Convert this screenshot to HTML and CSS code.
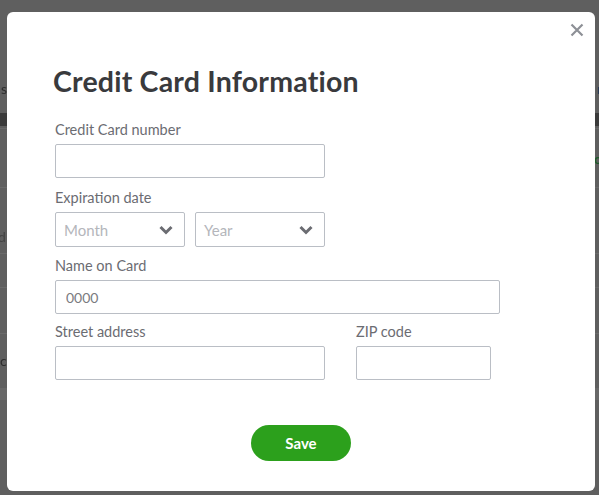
FILE: index.html
```html
<!DOCTYPE html>
<html lang="en">
<head>
  <meta charset="UTF-8" />
  <meta name="viewport" content="width=device-width, initial-scale=1.0" />
  <title>Credit Card Information</title>
  <link rel="stylesheet" href="styles.css">
</head>
<body>
  <div class="backdrop">
    <span class="bg-text bg-s">s</span>
    <span class="bg-text bg-d">d</span>
    <span class="bg-text bg-c">c</span>
    <span class="bg-text bg-r">r</span>
    <span class="bg-text bg-o">o</span>
  </div>

  <div class="modal">
    <button class="close" aria-label="Close">
      <svg width="14" height="14" viewBox="0 0 14 14"><path d="M1.5 1.5l11 11M12.5 1.5l-11 11" stroke="#8d9096" stroke-width="2.2" fill="none"/></svg>
    </button>

    <h1 class="title">Credit Card Information</h1>

    <form class="form">
      <label class="field">
        <span class="label">Credit Card number</span>
        <input class="input w-half" type="text">
      </label>

      <div class="field">
        <span class="label">Expiration date</span>
        <div class="row">
          <div class="select">
            <span>Month</span>
            <svg width="14" height="10" viewBox="0 0 14 10"><path d="M1.5 2l5.5 5.5L12.5 2" stroke="#6b6c72" stroke-width="3" fill="none"/></svg>
          </div>
          <div class="select">
            <span>Year</span>
            <svg width="14" height="10" viewBox="0 0 14 10"><path d="M1.5 2l5.5 5.5L12.5 2" stroke="#6b6c72" stroke-width="3" fill="none"/></svg>
          </div>
        </div>
      </div>

      <label class="field name">
        <span class="label">Name on Card</span>
        <input class="input w-full" type="text" value="0000">
      </label>

      <div class="row gap-wide last">
        <label class="field">
          <span class="label">Street address</span>
          <input class="input w-half" type="text">
        </label>
        <label class="field">
          <span class="label">ZIP code</span>
          <input class="input w-zip" type="text">
        </label>
      </div>
    </form>

    <div class="actions">
      <button class="save">Save</button>
    </div>
  </div>
</body>
</html>
```

FILE: styles.css
```css
* { margin: 0; padding: 0; box-sizing: border-box; }
html, body {
  width: 100%; height: 100%; overflow: hidden;
  background: #5f5f5f; font-family: Lato, 'Open Sans', sans-serif;
}
body { padding: 12px 4px 0 7px; }

/* dimmed page behind the dialog */
.backdrop {
  position: fixed; top: 0; left: 0; width: 100%; height: 100%;
  pointer-events: none;
  background:
    linear-gradient(#3b3b3b, #3b3b3b) 0 113px / 100% 13px no-repeat,
    linear-gradient(#6a6a6a, #6a6a6a) 0 128px / 100% 1px no-repeat,
    linear-gradient(#6a6a6a, #6a6a6a) 0 187px / 100% 1px no-repeat,
    linear-gradient(#6a6a6a, #6a6a6a) 0 253px / 100% 1px no-repeat,
    linear-gradient(#6a6a6a, #6a6a6a) 0 287px / 100% 1px no-repeat,
    linear-gradient(#6a6a6a, #6a6a6a) 0 333px / 100% 1px no-repeat,
    linear-gradient(#686868, #686868) 0 388px / 100% 12px no-repeat,
    #5f5f5f;
}
.bg-text { position: absolute; font-size: 14px; color: #2d2d2d; }
.bg-s { left: 1px; top: 80px; }
.bg-d { left: -2px; top: 228px; color: #444; }
.bg-c { left: 0; top: 352px; }
.bg-r { right: -3px; top: 80px; color: #2a3a55; }
.bg-o { right: -3px; top: 150px; color: #1f5c2a; font-weight: bold; }

.modal {
  position: relative;
  width: 588px; height: 479px;
  background: #fff; border-radius: 6px;
  padding: 52px 46px 0 46px;
  display: flex; flex-direction: column;
}
.close {
  position: absolute; top: 11px; right: 11px;
  border: 0; background: none; cursor: pointer; line-height: 0;
}
.title {
  font-size: 28.5px; font-weight: 700; color: #393a3d;
  letter-spacing: 0.2px; line-height: 34px;
}
.form {
  margin-top: 23px; padding-left: 2px;
  display: flex; flex-direction: column; gap: 11px;
}
.field { display: flex; flex-direction: column; }
.label {
  font-size: 14.5px; color: #6b6c72; line-height: 18px; margin-bottom: 5px;
}
.row { display: flex; gap: 10px; }
.gap-wide { gap: 31px; }
.name { margin-top: -1px; }
.last { margin-top: -2px; }

.input {
  height: 34px; border: 1px solid #babec5; border-radius: 2px;
  font: 14px Lato, 'Open Sans', sans-serif; color: #7a7b80;
  padding: 0 10px; outline: none; background: #fff;
}
.w-half { width: 270px; }
.w-full { width: 445px; }
.w-zip { width: 135px; }

.select {
  width: 130px; height: 35px;
  border: 1px solid #babec5; border-radius: 2px;
  display: flex; align-items: center; justify-content: space-between;
  padding: 0 11px 0 8px;
  font-size: 15px; color: #b4b6bb;
}

.actions { display: flex; justify-content: center; margin-top: 45px; }
.save {
  width: 100px; height: 36px; border: 0; border-radius: 18px;
  background: #2ca01c; color: #fff;
  font: 700 15px Lato, 'Open Sans', sans-serif; cursor: pointer;
}
```
